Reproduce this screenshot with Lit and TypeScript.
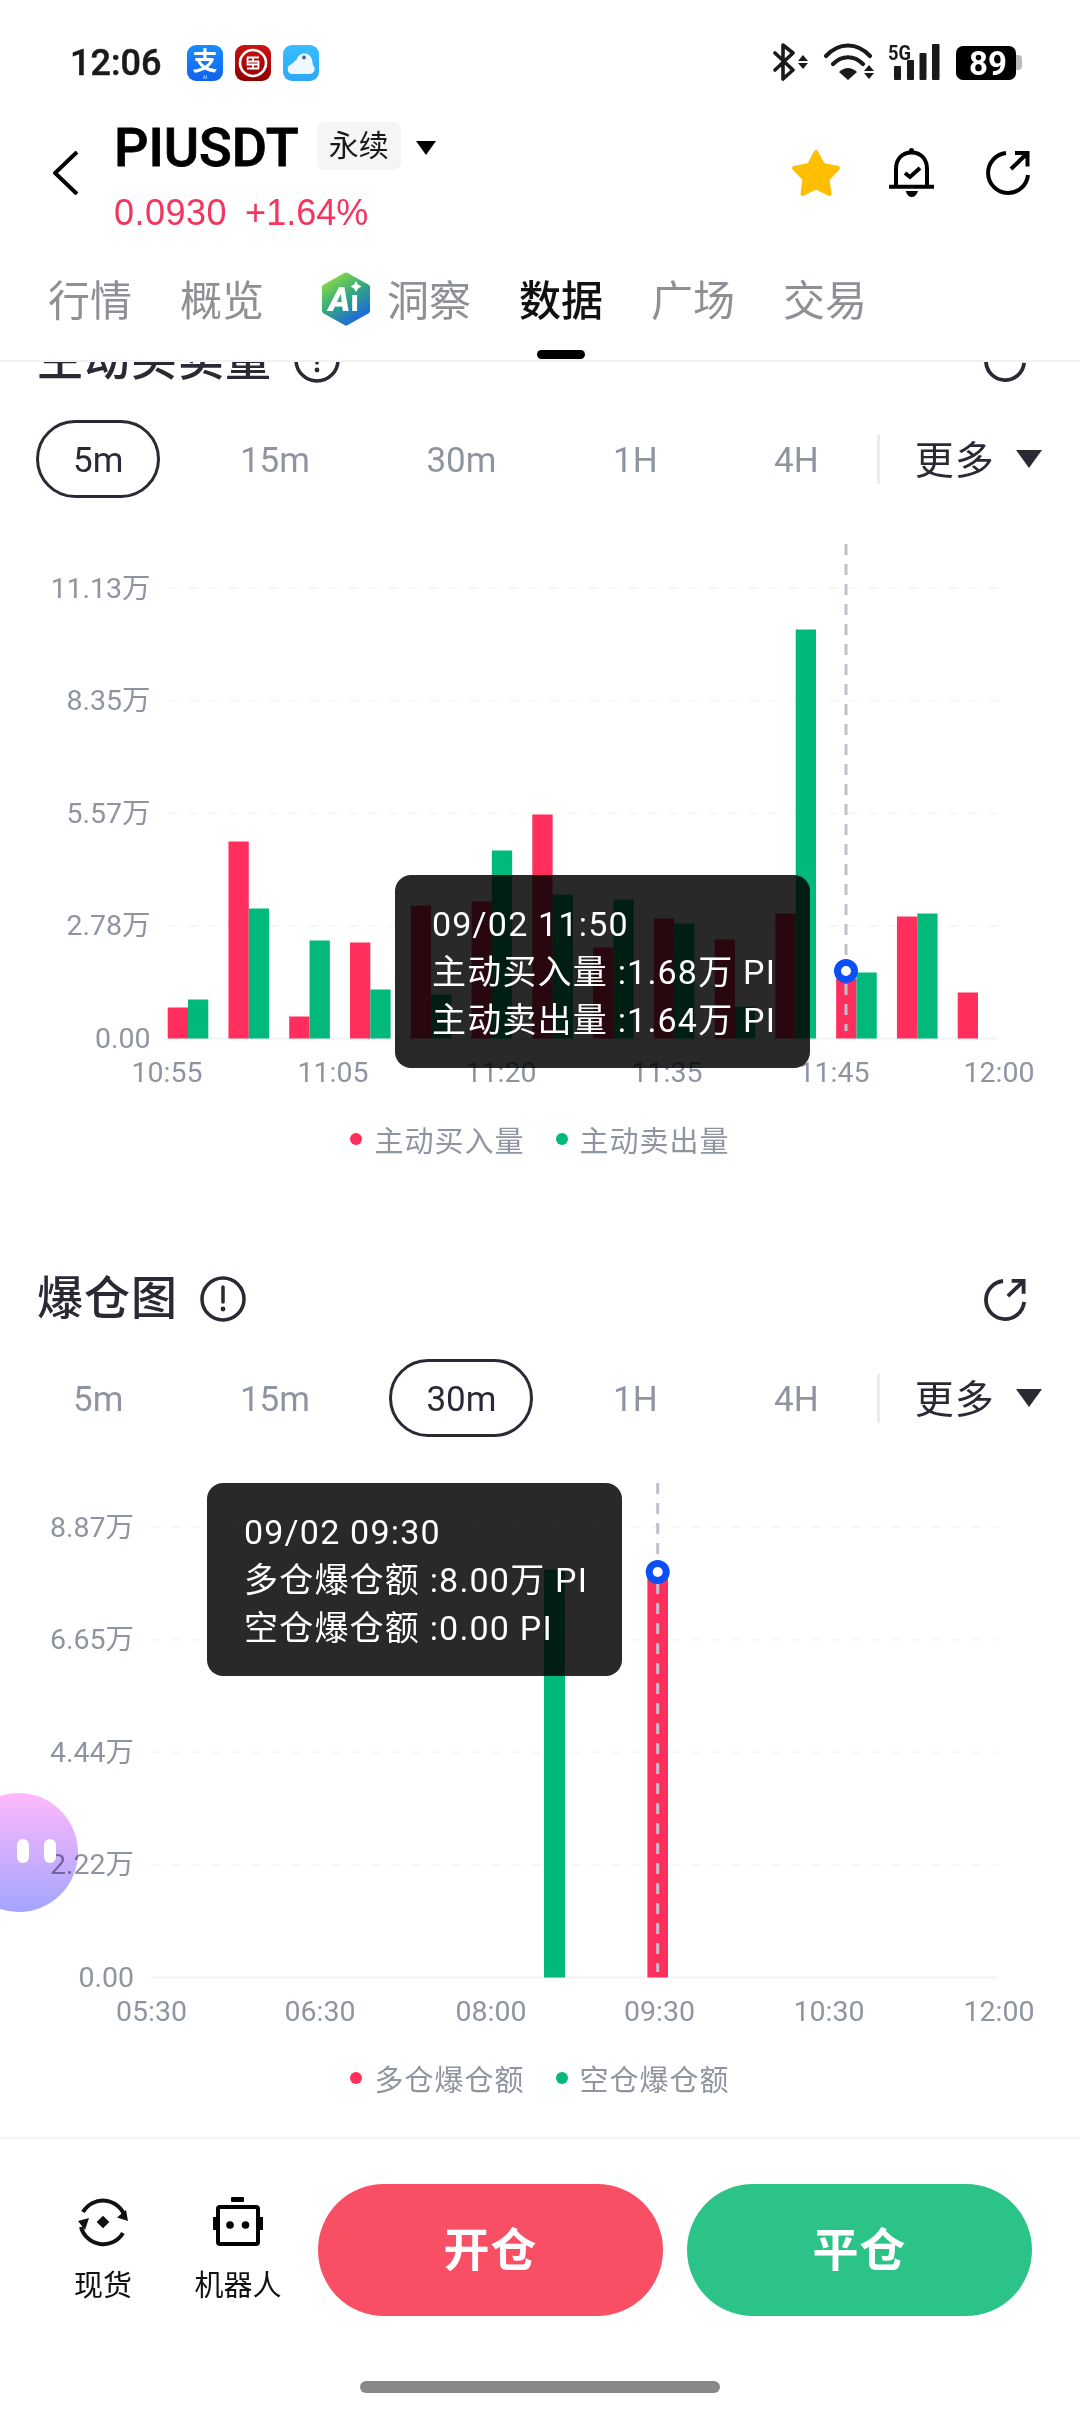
import { LitElement, html, svg, css } from "lit";
import { customElement, property } from "lit/decorators.js";

const FONT = css`Roboto, "Noto Sans CJK SC", sans-serif`;
const RED = "#ff2e5c";
const GREEN = "#00b97b";

interface Bar {
  x: number;
  w: number;
  h: number;
  color: string;
}

interface ChartData {
  title: string;
  active: string;
  yLabels: string[];
  labelRight: number;
  xLabels: { x: number; text: string }[];
  gridStart: number;
  bars: Bar[];
  cross: { x: number; top: number; bottom: number; dot: number };
  tip: { left: number; top: number; lines: string[] };
  legend: string[];
}

// heights of the buy / sell bars, one pair per 5m candle
const volume = [
  [31, 39], [197, 130], [22, 98], [96, 49], [133, 44], [137, 188], [224, 144],
  [91, 139], [120, 115], [99, 32], [125, 409], [60, 66], [122, 125], [46, 0],
];

const volumeBars: Bar[] = volume.flatMap(([buy, sell], i) => {
  const x = 167.7 + i * 60.77;
  return [
    { x, w: 20.3, h: buy, color: RED },
    { x: x + 20.3, w: 20.3, h: sell, color: GREEN },
  ];
});

const charts: ChartData[] = [
  {
    title: "主动买卖量",
    active: "5m",
    yLabels: ["11.13万", "8.35万", "5.57万", "2.78万", "0.00"],
    labelRight: 150.5,
    xLabels: [
      { x: 167, text: "10:55" },
      { x: 333, text: "11:05" },
      { x: 501, text: "11:20" },
      { x: 667, text: "11:35" },
      { x: 834, text: "11:45" },
      { x: 999, text: "12:00" },
    ],
    gridStart: 168,
    bars: volumeBars,
    cross: { x: 846, top: 46, bottom: 533, dot: 473 },
    tip: {
      left: 395,
      top: 377,
      lines: ["09/02 11:50", "主动买入量 :1.68万 PI", "主动卖出量 :1.64万 PI"],
    },
    legend: ["主动买入量", "主动卖出量"],
  },
  {
    title: "爆仓图",
    active: "30m",
    yLabels: ["8.87万", "6.65万", "4.44万", "2.22万", "0.00"],
    labelRight: 134,
    xLabels: [
      { x: 151.5, text: "05:30" },
      { x: 320, text: "06:30" },
      { x: 491, text: "08:00" },
      { x: 659.5, text: "09:30" },
      { x: 829, text: "10:30" },
      { x: 999, text: "12:00" },
    ],
    gridStart: 151,
    bars: [
      { x: 544, w: 21, h: 408, color: GREEN },
      { x: 647.4, w: 20.6, h: 408, color: RED },
    ],
    cross: { x: 657.7, top: 46, bottom: 535, dot: 135 },
    tip: {
      left: 207,
      top: 46,
      lines: ["09/02 09:30", "多仓爆仓额 :8.00万 PI", "空仓爆仓额 :0.00 PI"],
    },
    legend: ["多仓爆仓额", "空仓爆仓额"],
  },
];

const BASE = 540.5;
const ROW = 112.6;

const shareIcon = (size: number, color: string) => html`
  <svg width=${size} height=${size} viewBox="0 0 44 44" fill="none" stroke=${color} stroke-width="4">
    <path d="M20 2.1A20 20 0 1 0 42 24" />
    <path d="M25 18 41 2.5M29 2h12.5v13.5" />
  </svg>
`;

@customElement("chart-section")
export class ChartSection extends LitElement {
  @property({ attribute: false }) data!: ChartData;

  static styles = css`
    :host {
      display: block;
      font-family: ${FONT};
    }
    .heading {
      display: flex;
      align-items: center;
      height: 50px;
      padding: 0 54px 0 37px;
      color: #2a2a35;
    }
    .title {
      font-size: 46px;
      font-weight: 500;
      line-height: 50px;
      letter-spacing: 1px;
      padding-top: 1px;
    }
    .info {
      margin-left: 22px;
      margin-top: 4px;
    }
    .share {
      margin-left: auto;
      margin-top: 5px;
      display: flex;
    }
    .periods {
      display: flex;
      align-items: center;
      margin-top: 37px;
      padding-left: 36px;
      height: 78px;
    }
    .period {
      box-sizing: border-box;
      height: 78px;
      line-height: 76px;
      padding: 0 34px;
      border: 3px solid transparent;
      border-radius: 39px;
      font-size: 35px;
      color: #8f95a0;
      margin-right: 42.5px;
    }
    .period.on {
      border-color: #2a2a35;
      color: #2a2a35;
    }
    .divider {
      width: 3px;
      height: 49px;
      background: #e9edf2;
      margin-left: -21.5px;
    }
    .more {
      display: flex;
      align-items: center;
      margin-left: 35px;
      margin-top: -4px;
      font-size: 39px;
      letter-spacing: 1px;
      color: #2a2a35;
    }
    .more svg {
      margin-left: 21px;
      margin-top: 4px;
    }
    .chart {
      position: relative;
      height: 621px;
    }
    .chart svg {
      display: block;
    }
    .chart text {
      font-family: ${FONT};
      font-size: 28.5px;
      fill: #8f95a0;
    }
    .tip {
      position: absolute;
      box-sizing: border-box;
      width: 415px;
      height: 193px;
      padding: 25px 37px 0;
      border-radius: 16px;
      background: rgba(0, 0, 0, 0.84);
      color: #fff;
      font-size: 34px;
      line-height: 48px;
      letter-spacing: 1.2px;
      white-space: nowrap;
    }
    .legend {
      display: flex;
      justify-content: center;
      gap: 31px;
      height: 44px;
      margin-top: -2px;
      align-items: center;
      font-size: 29px;
      letter-spacing: 1px;
      color: #8f95a0;
    }
    .legend span {
      display: flex;
      align-items: center;
    }
    .dot {
      width: 12px;
      height: 12px;
      border-radius: 50%;
      margin-right: 12px;
    }
  `;

  render() {
    const d = this.data;
    return html`
      <div class="heading">
        <span class="title">${d.title}</span>
        <svg class="info" width="46" height="46" viewBox="0 0 46 46" fill="none" stroke="#2a2a35" stroke-width="3.5">
          <circle cx="23" cy="23" r="21" />
          <path d="M23 11v15" stroke-linecap="round" />
          <circle cx="23" cy="33" r="2.4" fill="#2a2a35" stroke="none" />
        </svg>
        <span class="share">${shareIcon(42, "#2a2a35")}</span>
      </div>
      <div class="periods">
        ${["5m", "15m", "30m", "1H", "4H"].map(
          (p) => html`<div class="period ${p === d.active ? "on" : ""}">${p}</div>`
        )}
        <div class="divider"></div>
        <div class="more">
          更多
          <svg width="26" height="18" viewBox="0 0 26 18"><path d="M0 0h26L13 18z" fill="#2a2a35" /></svg>
        </div>
      </div>
      <div class="chart">
        <svg width="1080" height="621" viewBox="0 0 1080 621">
          ${d.yLabels.map((label, i) => {
            const y = BASE - ROW * (4 - i);
            return svg`
              <text x=${d.labelRight} y=${y + 9.5} text-anchor="end">${label}</text>
              ${i < 4
                ? svg`<line x1=${d.gridStart} x2="998" y1=${y} y2=${y} stroke="#f6f7f8" stroke-width="2" stroke-dasharray="10 10" />`
                : svg`<line x1=${d.gridStart} x2="998" y1=${y} y2=${y} stroke="#f1f3f5" stroke-width="2" />`}
            `;
          })}
          ${d.bars.map(
            (b) => svg`<rect x=${b.x} y=${BASE - b.h} width=${b.w} height=${b.h} fill=${b.color} />`
          )}
          ${d.xLabels.map(
            (l) => svg`<text x=${l.x} y=${BASE + 43.5} text-anchor="middle">${l.text}</text>`
          )}
          <line
            x1=${d.cross.x}
            x2=${d.cross.x}
            y1=${d.cross.top}
            y2=${d.cross.bottom}
            stroke="#bfc0cc"
            stroke-width="3"
            stroke-dasharray="11 9"
          />
          <circle cx=${d.cross.x} cy=${d.cross.dot} r="8.5" fill="#fff" stroke="#0a50f5" stroke-width="7" />
        </svg>
        <div class="tip" style="left:${d.tip.left}px;top:${d.tip.top}px">
          ${d.tip.lines.map((line) => html`<div>${line}</div>`)}
        </div>
      </div>
      <div class="legend">
        <span><i class="dot" style="background:${RED}"></i>${d.legend[0]}</span>
        <span><i class="dot" style="background:${GREEN}"></i>${d.legend[1]}</span>
      </div>
    `;
  }
}

@customElement("app-root")
export class AppRoot extends LitElement {
  static styles = css`
    :host {
      display: block;
      position: relative;
      width: 1080px;
      height: 2412px;
      overflow: hidden;
      background: #fff;
      font-family: ${FONT};
    }
    .status {
      display: flex;
      align-items: center;
      height: 45px;
      padding: 40px 57px 0 70px;
    }
    .time {
      font-size: 36px;
      font-weight: 500;
      color: #1a1a1a;
      -webkit-text-stroke: 0.5px #1a1a1a;
      width: 117px;
    }
    .apps {
      display: flex;
      gap: 12px;
    }
    .apps svg {
      display: block;
    }
    .sys {
      margin-left: auto;
      display: block;
    }
    .sys text {
      font-family: Roboto, sans-serif;
      font-weight: 700;
    }
    .titlebar {
      display: flex;
      align-items: flex-start;
      margin-top: 36px;
      padding: 0 50px 0 53px;
    }
    .back {
      margin-top: 30px;
      width: 61px;
      flex: none;
    }
    .name {
      display: flex;
      align-items: center;
      height: 50px;
    }
    .symbol {
      font-size: 54px;
      font-weight: 500;
      color: #000;
      -webkit-text-stroke: 0.8px #000;
      line-height: 50px;
      padding-top: 3px;
    }
    .tag {
      margin-left: 18px;
      width: 84px;
      height: 48px;
      border-radius: 8px;
      background: #f5f5f5;
      color: #1a1a1a;
      font-size: 30px;
      line-height: 48px;
      text-align: center;
    }
    .caret {
      margin-left: 15px;
      margin-top: 3px;
    }
    .price {
      display: flex;
      gap: 18px;
      margin-top: 22px;
      height: 40px;
      line-height: 40px;
      font-family: "Liberation Sans", sans-serif;
      font-size: 36px;
      color: #f5355f;
    }
    .price span:first-child {
      letter-spacing: 0.5px;
    }
    .actions {
      margin-left: auto;
      display: flex;
      align-items: center;
      margin-top: 27px;
    }
    .actions .bell {
      margin: 0 52px 0 48px;
    }
    .tabs {
      display: flex;
      align-items: flex-start;
      gap: 48px;
      height: 54px;
      margin-top: 39px;
      padding: 0 48px 34px;
      border-bottom: 2px solid #f2f2f3;
      font-size: 42px;
      color: #8d9095;
    }
    .tab {
      position: relative;
      display: flex;
      align-items: center;
      line-height: 54px;
      padding-top: 3px;
    }
    .tab svg {
      margin: 0 16px 0 9px;
      transform: translateY(-3px);
    }
    .tab.on {
      color: #111;
      font-weight: 500;
    }
    .tab.on::after {
      content: "";
      position: absolute;
      left: 50%;
      bottom: -30px;
      width: 48px;
      height: 9px;
      margin-left: -24px;
      border-radius: 5px;
      background: #000;
    }
    .scroll {
      height: 1775px;
      overflow: hidden;
    }
    .scroll chart-section:first-child {
      margin-top: -29px;
    }
    .scroll chart-section + chart-section {
      margin-top: 111px;
    }
    .bottom {
      display: flex;
      align-items: flex-start;
      height: 274px;
      border-top: 2px solid #f2f3f5;
      box-sizing: border-box;
      position: relative;
    }
    .tool {
      display: flex;
      flex-direction: column;
      align-items: center;
      width: 130px;
      margin-top: 58px;
      color: #111;
      font-size: 29px;
      line-height: 40px;
    }
    .tool svg {
      margin-bottom: 19px;
      display: block;
    }
    .tool.spot {
      margin-left: 38px;
    }
    .tool.bot {
      margin-left: 5px;
    }
    .buttons {
      display: flex;
      gap: 24px;
      margin: 45px 0 0 15px;
    }
    .btn {
      width: 345px;
      height: 132px;
      border-radius: 66px;
      color: #fff;
      font-size: 46px;
      font-weight: 700;
      letter-spacing: 1px;
      line-height: 132px;
      text-align: center;
    }
    .btn.open {
      background: #f94f64;
    }
    .btn.close {
      background: #2cc389;
    }
    .home {
      position: absolute;
      left: 360px;
      top: 242px;
      width: 360px;
      height: 12px;
      border-radius: 6px;
      background: #888;
    }
    .bubble,
    .eyes {
      position: absolute;
      left: -41px;
      top: 1793px;
      width: 118.5px;
      height: 119px;
    }
    .bubble {
      border-radius: 50%;
      background: linear-gradient(180deg, #ffb8fb 0%, #a3a5ff 100%);
      mix-blend-mode: multiply;
    }
    .eye {
      position: absolute;
      top: 46px;
      width: 12px;
      height: 24px;
      border-radius: 6px;
      background: #fff;
    }
  `;

  render() {
    return html`
      <div class="status">
        <span class="time">12:06</span>
        <div class="apps">
          <svg width="36" height="36" viewBox="0 0 36 36">
            <defs>
              <linearGradient id="ali" x1="0" y1="0" x2="0" y2="1">
                <stop offset="0" stop-color="#1a8cff" />
                <stop offset="1" stop-color="#0f62ea" />
              </linearGradient>
            </defs>
            <rect width="36" height="36" rx="9" fill="url(#ali)" />
            <text x="18" y="25" text-anchor="middle" font-size="25" font-weight="700" fill="#fff"
              font-family="Noto Sans CJK SC">支</text>
            <text x="18" y="34" text-anchor="middle" font-size="5" fill="#cfe4ff" font-family="Roboto">AI</text>
          </svg>
          <svg width="36" height="36" viewBox="0 0 36 36" fill="none" stroke="#fff">
            <defs>
              <linearGradient id="bank" x1="0" y1="0" x2="0" y2="1">
                <stop offset="0" stop-color="#cc1212" />
                <stop offset="1" stop-color="#8f0000" />
              </linearGradient>
            </defs>
            <rect width="36" height="36" rx="9" fill="url(#bank)" stroke="none" />
            <circle cx="18" cy="18" r="13" stroke-width="2.6" />
            <path d="M12 12.5h12M18 12.5v4M12.5 16.5h11v3h-11zM18 19.5v4M12 23.5h12M12.5 12.5v4M23.5 19.5v4" stroke-width="1.8" />
          </svg>
          <svg width="36" height="36" viewBox="0 0 36 36">
            <defs>
              <linearGradient id="cloud" x1="0" y1="0" x2="0" y2="1">
                <stop offset="0" stop-color="#37bdff" />
                <stop offset="1" stop-color="#2ea8f6" />
              </linearGradient>
            </defs>
            <rect width="36" height="36" rx="9" fill="url(#cloud)" />
            <path d="M9 29C4 29 3 21 8 19.500 10 18 12 16 14 14 15 9 22 7 26 10 30 13 29 17 30 20 33 23 32 29 26 29Z" fill="#eef8ff" />
            <circle cx="21" cy="12.500" r="2" fill="#3c6f8f" />
          </svg>
        </div>
        <svg class="sys" width="250" height="40" viewBox="0 0 250 40">
          <g fill="none" stroke="#1a1a1a">
            <path d="M2 10 20 27 10 36V2L20 10 2 27" stroke-width="3.6" stroke-linejoin="round" stroke-linecap="round" />
            <path d="M53 13C66 -1 84 -1 97 13" stroke-width="4.200" stroke-linecap="round" />
            <path d="M60 21C69 12 81 12 90 21" stroke-width="4.200" stroke-linecap="round" />
          </g>
          <g fill="#1a1a1a">
            <path d="M25 18h10l-5-6zM25 20h10l-5 6z" />
            <path d="M66 29Q75 21 84 29L75 37z" />
            <path d="M91 28h10l-5-6zM91 30h10l-5 6z" />
            <rect x="121" y="23" width="7" height="14" rx="1" />
            <rect x="134" y="17" width="7" height="20" rx="1" />
            <rect x="146.500" y="10" width="7" height="27" rx="1" />
            <rect x="159" y="1" width="7.500" height="36" rx="1" />
            <text x="115" y="17" font-size="21" textLength="23" lengthAdjust="spacingAndGlyphs">5G</text>
          </g>
          <rect x="183" y="3" width="60" height="34" rx="7" fill="#000" />
          <path d="M243 12h2q4 0 4 4v7q0 4-4 4h-2z" fill="#bbb" />
          <text x="215" y="32" font-size="33" fill="#fff" text-anchor="middle">89</text>
        </svg>
      </div>

      <div class="titlebar">
        <svg class="back" height="44" viewBox="0 0 61 44" fill="none" stroke="#000" stroke-width="4">
          <path d="M24 1 2 22 24 43" />
        </svg>
        <div>
          <div class="name">
            <span class="symbol">PIUSDT</span>
            <span class="tag">永续</span>
            <svg class="caret" width="20" height="14" viewBox="0 0 20 14"><path d="M0 0h20L10 14z" fill="#000" /></svg>
          </div>
          <div class="price"><span>0.0930</span><span>+1.64%</span></div>
        </div>
        <div class="actions">
          <svg width="50" height="50" viewBox="0 0 50 50">
            <polygon
              points="25,4 32,17 47,20 36.500,31 38.500,46 25,39.500 11.500,46 13.500,31 3,20 18,17"
              fill="#ffbf00"
              stroke="#ffbf00"
              stroke-width="4"
              stroke-linejoin="round"
            />
          </svg>
          <svg class="bell" width="45" height="50" viewBox="0 0 45 50" fill="none" stroke="#000" stroke-width="4">
            <path d="M7 38V21C7 11 13 4.500 22.500 4.500S38 11 38 21V38" />
            <path d="M0 38.700H45" />
            <path d="M16 25 21 29 31 20" />
            <circle cx="22.500" cy="2.500" r="2.500" fill="#000" stroke="none" />
            <path d="M16.700 43H29Q27 49 22.800 49T16.700 43Z" fill="#000" stroke="none" />
          </svg>
          ${shareIcon(44, "#000")}
        </div>
      </div>

      <div class="tabs">
        <span class="tab">行情</span>
        <span class="tab">概览</span>
        <span class="tab">
          <svg width="50" height="54" viewBox="0 0 50 54">
            <defs>
              <linearGradient id="hex" x1="0.150" y1="0" x2="0.750" y2="1">
                <stop offset="0" stop-color="#8fdc42" />
                <stop offset="0.500" stop-color="#2fa882" />
                <stop offset="1" stop-color="#1f63e8" />
              </linearGradient>
            </defs>
            <path d="M25 3 46.500 15V39L25 51 3.500 39V15Z" fill="url(#hex)" stroke="url(#hex)" stroke-width="5" stroke-linejoin="round" />
            <text x="7.500" y="39" font-family="Roboto" font-size="33" font-weight="900" font-style="italic" fill="#fff">A</text>
            <text x="29.500" y="39" font-family="Roboto" font-size="29" font-weight="900" fill="#fff">ı</text>
            <path d="M35 9 37 12.500 40.500 14.500 37 16.500 35 20 33 16.500 29.500 14.500 33 12.500Z" fill="#fff" />
          </svg>
          洞察
        </span>
        <span class="tab on">数据</span>
        <span class="tab">广场</span>
        <span class="tab">交易</span>
      </div>

      <div class="scroll">
        ${charts.map((c) => html`<chart-section .data=${c}></chart-section>`)}
      </div>

      <div class="bottom">
        <div class="tool spot">
          <svg width="50" height="50" viewBox="0 0 50 50" fill="none" stroke="#111" stroke-width="4">
            <path d="M5 15A23 23 0 0 1 47 20" />
            <path d="M3 30A23 23 0 0 0 45 36" />
            <path d="M39 20.500 50 24 48 13z" fill="#111" stroke="none" />
            <path d="M0 24 11 21 7 33z" fill="#111" stroke="none" />
            <rect x="20.500" y="20.500" width="9" height="9" transform="rotate(45 25 25)" fill="#111" stroke="none" />
          </svg>
          现货
        </div>
        <div class="tool bot">
          <svg width="50" height="50" viewBox="0 0 50 50" fill="#000">
            <rect x="18" y="0" width="13" height="5" rx="1" />
            <rect x="0" y="20" width="4" height="13" />
            <rect x="46" y="20" width="4" height="13" />
            <rect x="5" y="10" width="40" height="37" rx="2" fill="none" stroke="#000" stroke-width="4" />
            <circle cx="17" cy="28" r="3.800" />
            <circle cx="32.500" cy="28" r="3.800" />
          </svg>
          机器人
        </div>
        <div class="buttons">
          <div class="btn open">开仓</div>
          <div class="btn close">平仓</div>
        </div>
        <div class="home"></div>
      </div>

      <div class="bubble"></div>
      <div class="eyes">
        <div class="eye" style="left:58px"></div>
        <div class="eye" style="left:85px"></div>
      </div>
    `;
  }
}
